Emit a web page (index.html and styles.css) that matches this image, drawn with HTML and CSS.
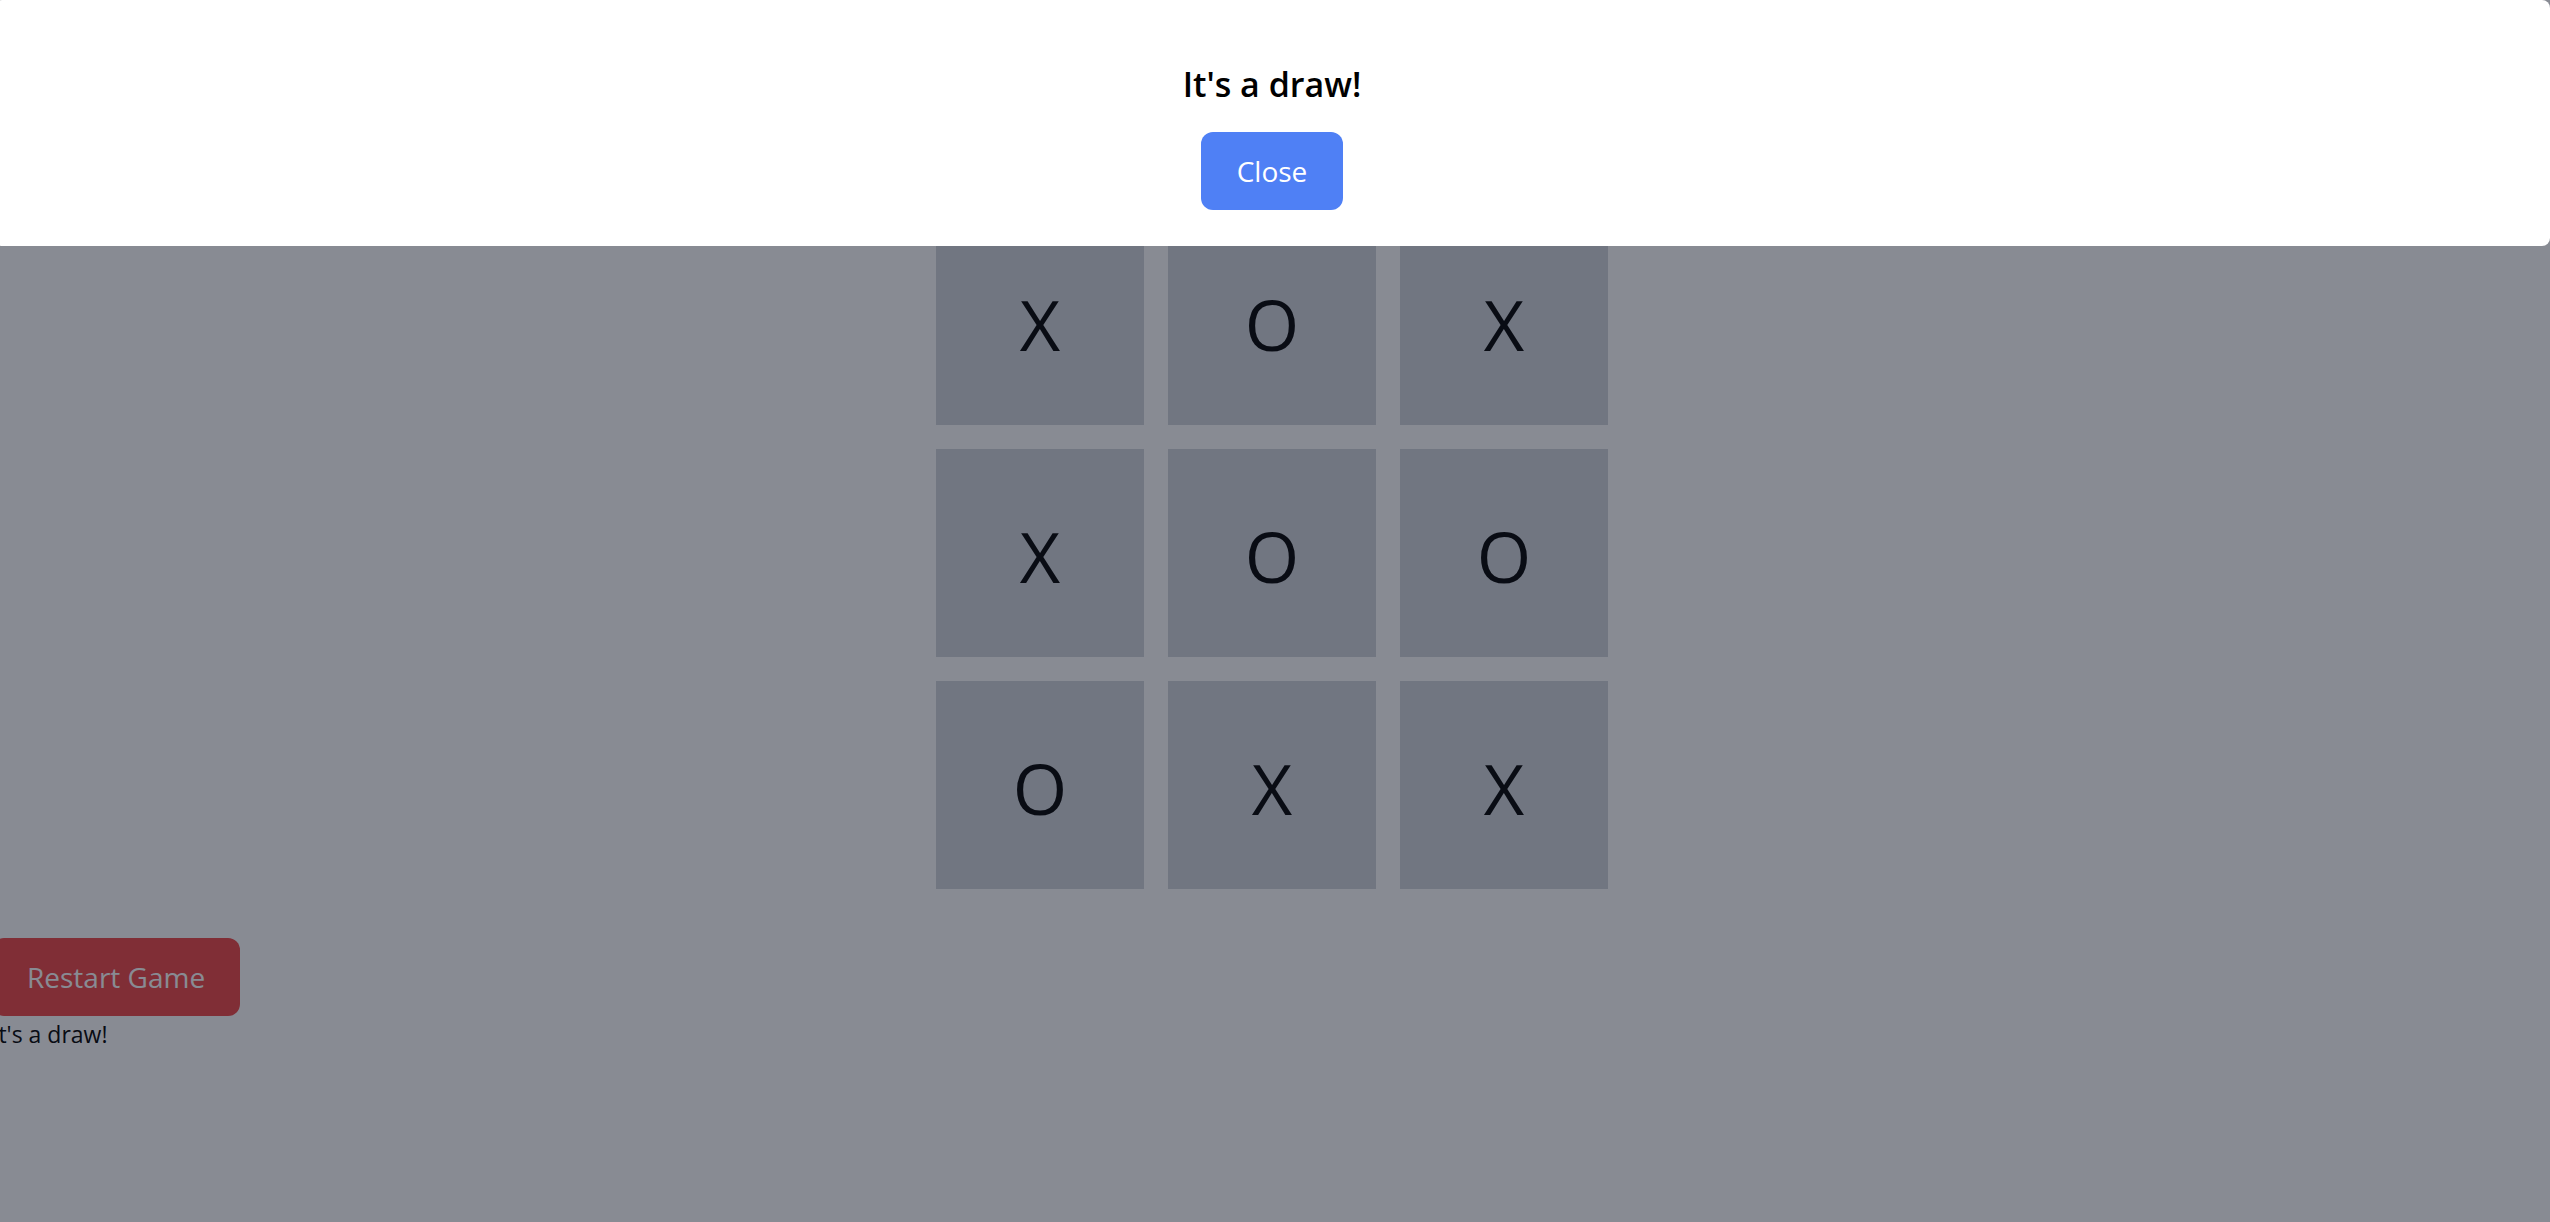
FILE: index.html
```html
<!DOCTYPE html>
<html lang="en">
<head>
<meta charset="utf-8">
<title>Tic Tac Toe</title>
<link rel="stylesheet" href="styles.css">
</head>
<body>
<div class="page">
  <div class="board">
    <div class="cell">X</div>
    <div class="cell">O</div>
    <div class="cell">X</div>
    <div class="cell">X</div>
    <div class="cell">O</div>
    <div class="cell">O</div>
    <div class="cell">O</div>
    <div class="cell">X</div>
    <div class="cell">X</div>
  </div>
  <div class="controls">
    <button class="restart">Restart Game</button>
    <p class="status">It's a draw!</p>
  </div>
</div>
<div class="overlay"></div>
<div class="modal">
  <h2 class="modal-title">It's a draw!</h2>
  <button class="close">Close</button>
</div>
</body>
</html>
```
FILE: styles.css
```css
html, body {
  margin: 0;
  padding: 0;
  background: #ffffff;
  font-family: "Open Sans", "Noto Sans", sans-serif;
  color: #000000;
  overflow: hidden;
}

.page {
  display: flex;
  flex-direction: column;
  padding: 217px 6px 0 0;
  min-height: 1222px;
  box-sizing: border-box;
}

.board {
  align-self: center;
  display: grid;
  grid-template-columns: repeat(3, 208px);
  grid-auto-rows: 208px;
  gap: 24px;
}

.cell {
  background: #d1d5db;
  display: flex;
  align-items: center;
  justify-content: center;
  font-size: 70px;
  color: #000000;
  padding-top: 6px;
  box-sizing: border-box;
}

.controls {
  margin-top: 49px;
  margin-left: -8px;
  display: flex;
  flex-direction: column;
  align-items: flex-start;
}

.restart {
  background: #ef4444;
  color: #ffffff;
  border: none;
  border-radius: 12px;
  font-family: inherit;
  font-size: 28px;
  line-height: 42px;
  padding: 18px 35px 18px 35px;
}

.status {
  margin: 0;
  font-size: 23px;
  line-height: 36px;
}

.overlay {
  position: fixed;
  inset: 0;
  background: rgba(17, 24, 39, 0.5);
  z-index: 10;
}

.modal {
  position: fixed;
  top: 0;
  left: -6px;
  right: 0;
  z-index: 20;
  background: #ffffff;
  border-radius: 8px;
  padding: 60px 0 36px;
  display: flex;
  flex-direction: column;
  align-items: center;
}

.modal-title {
  margin: 0 0 24px;
  font-size: 34px;
  line-height: 48px;
  font-weight: 600;
  color: #000000;
}

.close {
  background: #4f80f5;
  color: #ffffff;
  border: none;
  border-radius: 12px;
  font-family: inherit;
  font-size: 28px;
  line-height: 42px;
  padding: 18px 36px;
}
```
